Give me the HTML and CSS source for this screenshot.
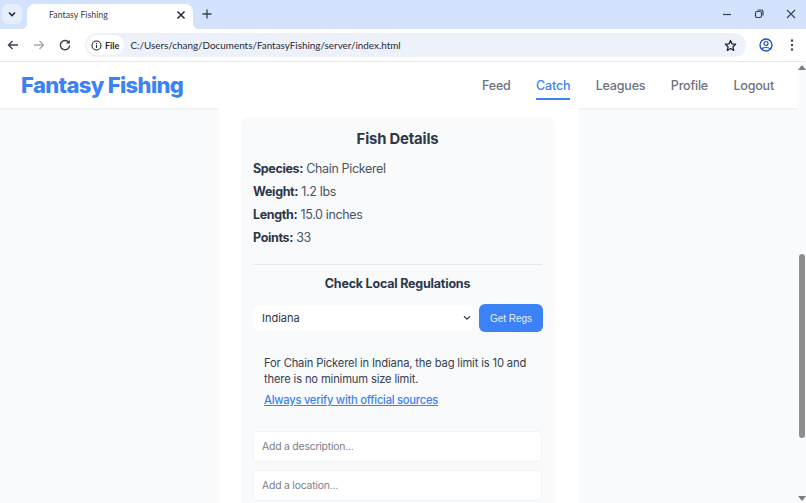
FILE: index.html
```html
<!DOCTYPE html>
<html lang="en">
<head>
  <meta charset="UTF-8">
  <meta name="viewport" content="width=device-width, initial-scale=1.0">
  <title>Fantasy Fishing</title>
  <link rel="stylesheet" href="styles.css">
</head>
<body>
  <!-- Browser chrome -->
  <div class="tabstrip">
    <div class="tab-search">
      <svg width="10" height="10" viewBox="0 0 10 10"><path d="M2 3.5 5 6.5 8 3.5" fill="none" stroke="#1f2937" stroke-width="1.6"/></svg>
    </div>
    <div class="tab">
      <span class="tab-title">Fantasy Fishing</span>
      <svg width="10" height="10" viewBox="0 0 10 10"><path d="M1.5 1.5 8.5 8.5M8.5 1.5 1.5 8.5" stroke="#1f2937" stroke-width="1.5"/></svg>
    </div>
    <svg class="new-tab" width="10" height="10" viewBox="0 0 10 10"><path d="M5 0.5V9.5M0.5 5H9.5" stroke="#374151" stroke-width="1.3"/></svg>
    <div class="window-controls">
      <svg width="10" height="10" viewBox="0 0 10 10"><path d="M1 5.5H9" stroke="#374151" stroke-width="1.2"/></svg>
      <svg width="10" height="10" viewBox="0 0 10 10"><rect x="1.5" y="2.5" width="6" height="6" rx="1.5" fill="none" stroke="#374151" stroke-width="1.2"/><path d="M3.5 1H7.5A1.5 1.5 0 0 1 9 2.5V6.5" fill="none" stroke="#374151" stroke-width="1.2"/></svg>
      <svg width="10" height="10" viewBox="0 0 10 10"><path d="M1 1 9 9M9 1 1 9" stroke="#374151" stroke-width="1.1"/></svg>
    </div>
  </div>

  <div class="toolbar">
    <svg width="12" height="12" viewBox="0 0 12 12"><path d="M11 6H1.5M5.5 2 1.5 6 5.5 10" fill="none" stroke="#374151" stroke-width="1.4"/></svg>
    <svg width="12" height="12" viewBox="0 0 12 12"><path d="M1 6H10.5M6.5 2 10.5 6 6.5 10" fill="none" stroke="#a3a9b3" stroke-width="1.4"/></svg>
    <svg width="12" height="12" viewBox="0 0 12 12"><path d="M10 3.8A4.6 4.6 0 1 0 10.6 6.5" fill="none" stroke="#374151" stroke-width="1.4"/><path d="M10.8 0.8V4.5H7.1Z" fill="#374151"/></svg>
    <div class="omnibox">
      <div class="chip">
        <svg width="11" height="11" viewBox="0 0 11 11"><circle cx="5.5" cy="5.5" r="4.5" fill="none" stroke="#1f2937" stroke-width="1.1"/><path d="M5.5 4.8V8M5.5 3V4" stroke="#1f2937" stroke-width="1.1"/></svg>
        <span>File</span>
      </div>
      <span class="url">C:/Users/chang/Documents/FantasyFishing/server/index.html</span>
      <svg class="star" width="13" height="13" viewBox="0 0 24 24"><path d="M12 2.8 14.8 9 21.5 9.7 16.5 14.2 17.9 20.9 12 17.5 6.1 20.9 7.5 14.2 2.5 9.7 9.2 9Z" fill="none" stroke="#1f2937" stroke-width="2.4" stroke-linejoin="round"/></svg>
    </div>
    <svg class="profile" width="14" height="14" viewBox="0 0 14 14"><circle cx="7" cy="7" r="6" fill="none" stroke="#1d4fc4" stroke-width="1.3"/><circle cx="7" cy="5.5" r="2" fill="none" stroke="#1d4fc4" stroke-width="1.2"/><path d="M3 11C4 9 10 9 11 11" fill="none" stroke="#1d4fc4" stroke-width="1.2"/></svg>
    <svg class="menu" width="4" height="12" viewBox="0 0 4 12"><circle cx="2" cy="1.5" r="1.2" fill="#374151"/><circle cx="2" cy="6" r="1.2" fill="#374151"/><circle cx="2" cy="10.5" r="1.2" fill="#374151"/></svg>
  </div>

  <div class="viewport">
    <div class="page">
      <!-- Site header -->
      <header class="site-header">
        <div class="logo">Fantasy Fishing</div>
        <nav class="nav">
          <a href="#">Feed</a>
          <a href="#" class="active">Catch</a>
          <a href="#">Leagues</a>
          <a href="#">Profile</a>
          <a href="#">Logout</a>
        </nav>
      </header>

      <main class="card">
        <section class="details">
          <h2>Fish Details</h2>
          <p class="fact"><strong>Species:</strong> Chain Pickerel</p>
          <p class="fact"><strong>Weight:</strong> 1.2 lbs</p>
          <p class="fact"><strong>Length:</strong> 15.0 inches</p>
          <p class="fact"><strong>Points:</strong> 33</p>

          <hr class="divider">

          <h3>Check Local Regulations</h3>
          <div class="regs-form">
            <div class="state-select">
              <span>Indiana</span>
              <svg width="8" height="6" viewBox="0 0 8 6"><path d="M1 1.2 4 4.2 7 1.2" fill="none" stroke="#374151" stroke-width="1.3"/></svg>
            </div>
            <button type="button" class="regs-btn">Get Regs</button>
          </div>

          <div class="regs-result">
            <p>For Chain Pickerel in Indiana, the bag limit is 10 and there is no minimum size limit.</p>
            <a href="#">Always verify with official sources</a>
          </div>

          <input class="text-field" type="text" placeholder="Add a description...">
          <input class="text-field" type="text" placeholder="Add a location...">
        </section>
      </main>
    </div>

    <div class="scrollbar">
      <div class="arrow-up"></div>
      <div class="thumb"></div>
      <div class="arrow-down"></div>
    </div>
  </div>
</body>
</html>
```

FILE: styles.css
```css
/* Basic page setup */
html, body {
  height: 100%;
}
body {
  margin: 0;
  display: flex;
  flex-direction: column;
  overflow: hidden;
  font-family: Inter, "Noto Sans", sans-serif;
  color: #374151;
  background-color: #fff;
}

/* Browser chrome */
.tabstrip {
  height: 29px;
  display: flex;
  align-items: flex-end;
  background-color: #d3e3fd;
  flex-shrink: 0;
}
.tab-search {
  width: 20px;
  height: 20px;
  margin: 0 5px 5px 2px;
  border-radius: 6px;
  background-color: #e6eefc;
  display: flex;
  align-items: center;
  justify-content: center;
}
.tab {
  position: relative;
  width: 166px;
  height: 25px;
  padding: 0 7px 4px 22px;
  box-sizing: border-box;
  border-radius: 8px 8px 0 0;
  background-color: #fff;
  display: flex;
  align-items: center;
  justify-content: space-between;
}
/* flared bottom corners of the active tab */
.tab::before, .tab::after {
  content: "";
  position: absolute;
  bottom: 0;
  width: 6px;
  height: 6px;
}
.tab::before {
  left: -6px;
  background: radial-gradient(circle at 0 0, transparent 6px, #fff 6.5px);
}
.tab::after {
  right: -6px;
  background: radial-gradient(circle at 100% 0, transparent 6px, #fff 6.5px);
}
.tab-title {
  font-family: Lato, sans-serif;
  font-size: 8.8px;
  color: #3c4043;
}
.new-tab {
  margin: 0 0 10px 9px;
}
.window-controls {
  margin: 0 10px 10px auto;
  display: flex;
  gap: 22px;
}
.toolbar {
  height: 33px;
  padding: 0 7px;
  box-sizing: border-box;
  display: flex;
  align-items: center;
  gap: 14px;
  background-color: #fff;
  border-bottom: 1px solid #e8eaed;
  flex-shrink: 0;
}
.omnibox {
  width: 661px;
  height: 24px;
  padding-left: 2px;
  box-sizing: border-box;
  display: flex;
  align-items: center;
  border-radius: 12px;
  background-color: #edf2fa;
}
.chip {
  height: 20px;
  padding: 0 5px 0 4px;
  display: flex;
  align-items: center;
  gap: 3px;
  border-radius: 10px;
  background-color: #fff;
  font-family: Lato, sans-serif;
  font-size: 9px;
  font-weight: 700;
  color: #1f2937;
}
.url {
  margin-left: 6px;
  font-family: Lato, sans-serif;
  font-size: 9.9px;
  color: #1f2937;
}
.star {
  margin-left: auto;
  margin-right: 9px;
}
.profile {
  margin-left: -1px;
}
.menu {
  margin-left: 3px;
}

/* Page area */
.viewport {
  flex: 1;
  display: flex;
  min-height: 0;
}
.page {
  flex: 1;
  min-width: 0;
  padding-right: 2px;
  box-sizing: border-box;
  background-color: #f9fafb;
}
.scrollbar {
  width: 8px;
  padding: 3px 0 2px;
  box-sizing: border-box;
  display: flex;
  flex-direction: column;
  align-items: center;
  background-color: #fafbfc;
}
.arrow-up {
  border-left: 4px solid transparent;
  border-right: 4px solid transparent;
  border-bottom: 5px solid #7d7d7d;
}
.arrow-down {
  border-left: 4px solid transparent;
  border-right: 4px solid transparent;
  border-top: 5px solid #7d7d7d;
}
.thumb {
  width: 6px;
  height: 184px;
  margin: 184px 0 auto;
  border-radius: 3px;
  background-color: #8f8f8f;
}

/* Site header */
.site-header {
  height: 46px;
  margin-right: -2px;
  padding: 0 24px 0 21px;
  box-sizing: border-box;
  display: flex;
  align-items: center;
  justify-content: space-between;
  background-color: #fff;
  box-shadow: 0 1px 2px rgba(0, 0, 0, 0.06);
}
.logo {
  font-size: 22px;
  font-weight: 800;
  letter-spacing: -0.65px;
  color: #3b82f6;
}
.nav {
  display: flex;
  gap: 25.5px;
  padding-top: 2px;
}
.nav a {
  padding: 6px 0 5px;
  border-bottom: 2px solid transparent;
  font-size: 12.5px;
  font-weight: 500;
  letter-spacing: -0.2px;
  color: #6b7280;
  text-decoration: none;
}
.nav a.active {
  color: #3b82f6;
  border-bottom-color: #3b82f6;
}

/* Main card */
.card {
  width: 360px;
  margin: 0 auto;
  padding: 9px 24px 0 23px;
  box-sizing: border-box;
  background-color: #fff;
}
.details {
  padding: 12px;
  border-radius: 8px;
  background-color: #f9fafb;
}
.details h2 {
  margin: 1px 0 12px;
  font-size: 14.8px;
  line-height: 18px;
  font-weight: 700;
  letter-spacing: -0.15px;
  color: #2d3748;
  text-align: center;
}
.fact {
  margin: 0 0 6px;
  font-size: 12.5px;
  line-height: 17px;
  letter-spacing: -0.35px;
  color: #4b5563;
}
.fact strong {
  font-weight: 700;
  color: #2d3748;
}
.divider {
  margin: 18px 0 12px;
  border: none;
  border-top: 1px solid #e5e7eb;
}
.details h3 {
  margin: 0 0 13px;
  font-size: 12.5px;
  line-height: 14px;
  font-weight: 700;
  letter-spacing: -0.2px;
  color: #2d3748;
  text-align: center;
}
.regs-form {
  display: flex;
  align-items: center;
  gap: 6px;
  margin-right: -1px;
}
.state-select {
  flex: 1;
  height: 26px;
  padding: 0 2px 0 9px;
  display: flex;
  align-items: center;
  justify-content: space-between;
  border-radius: 6px;
  background-color: #fff;
  font-size: 11px;
  color: #2d3748;
}
.regs-btn {
  width: 64px;
  height: 28px;
  padding: 0;
  border: none;
  border-radius: 6px;
  background-color: #3b82f6;
  color: #e5efff;
  font-family: "Liberation Sans", sans-serif;
  font-size: 10px;
}
.regs-result {
  padding: 23px 11px 23px;
  margin-right: -6px;
}
.regs-result p {
  margin: 0 0 5px;
  font-size: 11.2px;
  line-height: 16px;
  letter-spacing: -0.15px;
  color: #374151;
}
.regs-result a {
  display: block;
  font-size: 11.2px;
  line-height: 16px;
  font-weight: 500;
  letter-spacing: -0.25px;
  color: #3b82f6;
}
.text-field {
  display: block;
  width: 100%;
  height: 31px;
  margin-bottom: 8px;
  padding: 0 8px;
  box-sizing: border-box;
  border: 1px solid #f1f3f5;
  border-radius: 4px;
  background-color: #fff;
  font-family: inherit;
  font-size: 10.4px;
  letter-spacing: -0.2px;
}
.text-field::placeholder {
  color: #7b8088;
}
```
